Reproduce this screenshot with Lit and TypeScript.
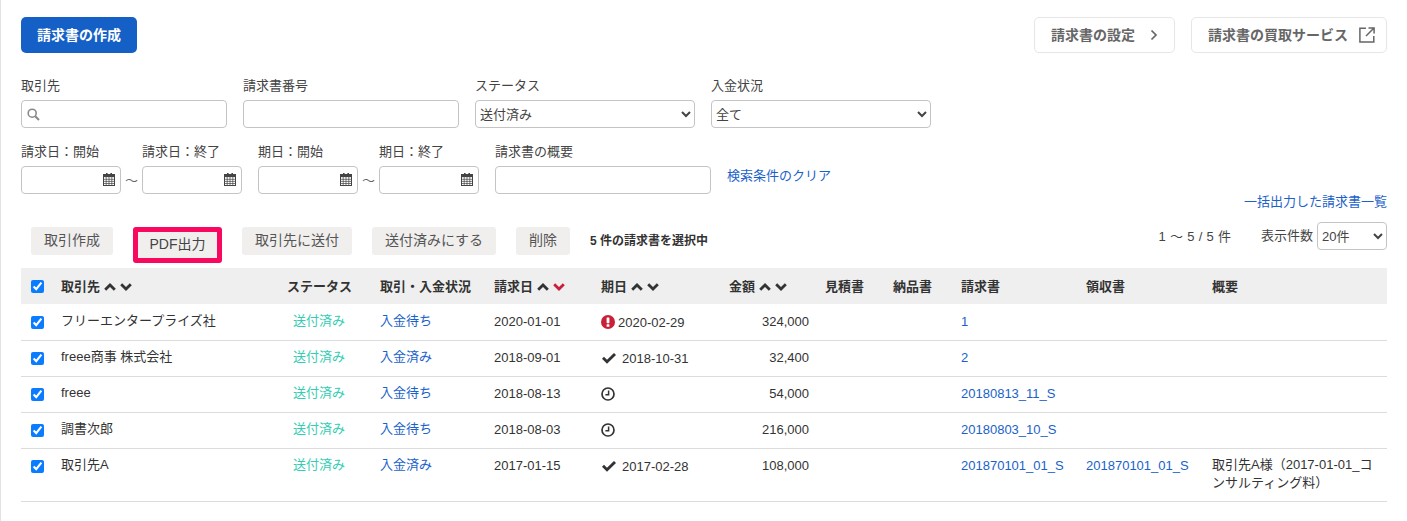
import { LitElement, html, css, svg } from "lit";
import { customElement } from "lit/decorators.js";

const chevron = (up: boolean, cls = "") => html`<svg class="chev ${cls}" viewBox="0 0 12 8" width="12" height="8">${svg`<polyline points=${up ? "1.2,6.8 6,2 10.8,6.8" : "1.2,1.2 6,6 10.8,1.2"} fill="none" stroke="currentColor" stroke-width="2.8"/>`}</svg>`;
const sort = (red = false) => html`<span class="sort">${chevron(true)}${chevron(false, red ? "red" : "")}</span>`;

const calendar = html`<svg class="cal" viewBox="0 0 12 13" width="12" height="13">${svg`
  <rect x="3" y="0" width="1.6" height="3" fill="#444"/><rect x="7.4" y="0" width="1.6" height="3" fill="#444"/>
  <rect x="0.5" y="1.5" width="11" height="11" fill="none" stroke="#444"/>
  <rect x="0.5" y="1.5" width="11" height="2.6" fill="#444"/>
  <path d="M0.5 6.3H11.5M0.5 8.4H11.5M0.5 10.5H11.5M3.2 4V12.5M6 4V12.5M8.8 4V12.5" stroke="#444" stroke-width="0.7" fill="none"/>`}</svg>`;

const iconAlert = html`<svg class="st" viewBox="0 0 14 14" width="14" height="14">${svg`<circle cx="7" cy="7" r="7" fill="#c9203a"/><rect x="5.6" y="2.4" width="2.8" height="5.8" rx="0.6" fill="#fff"/><rect x="5.6" y="9.3" width="2.8" height="2.4" rx="0.5" fill="#fff"/>`}</svg>`;
const iconCheck = html`<svg class="st chk" viewBox="0 0 14 11" width="14" height="11">${svg`<polygon points="0,5.8 2,3.8 5,6.7 12,0 14,2 5,10.8" fill="#333"/>`}</svg>`;
const iconClock = html`<svg class="st" viewBox="0 0 14 14" width="14" height="14">${svg`<circle cx="7" cy="7" r="6" fill="none" stroke="#333" stroke-width="1.7"/><polyline points="7.6,3.4 7.6,7.8 4.4,7.8" fill="none" stroke="#333" stroke-width="1.5"/>`}</svg>`;

interface Row { name: string; pay: string; date: string; due: string; icon: unknown; amt: string; inv: string; rec: string; note: string; }
const rows: Row[] = [
  { name: "フリーエンタープライズ社", pay: "入金待ち", date: "2020-01-01", due: "2020-02-29", icon: iconAlert, amt: "324,000", inv: "1", rec: "", note: "" },
  { name: "freee商事 株式会社", pay: "入金済み", date: "2018-09-01", due: "2018-10-31", icon: iconCheck, amt: "32,400", inv: "2", rec: "", note: "" },
  { name: "freee", pay: "入金待ち", date: "2018-08-13", due: "", icon: iconClock, amt: "54,000", inv: "20180813_11_S", rec: "", note: "" },
  { name: "調書次郎", pay: "入金待ち", date: "2018-08-03", due: "", icon: iconClock, amt: "216,000", inv: "20180803_10_S", rec: "", note: "" },
  { name: "取引先A", pay: "入金済み", date: "2017-01-15", due: "2017-02-28", icon: iconCheck, amt: "108,000", inv: "201870101_01_S", rec: "201870101_01_S", note: "取引先A様（2017-01-01_コンサルティング料）" },
];

@customElement("app-root")
export class AppRoot extends LitElement {
  static styles = css`
    :host { display: block; box-sizing: border-box; height: 521px; overflow: hidden; border-left: 1px solid #e2e2e2; padding: 17px 20px 0 20px; background: #fff; color: #333; font: 13px/18px "Liberation Sans", "Noto Sans CJK JP", sans-serif; }
    * { box-sizing: border-box; }
    a { color: #1a62c9; text-decoration: none; }
    .top { display: flex; align-items: flex-start; gap: 16px; height: 36px; }
    .top .spacer { flex: 1; }
    .btn-primary { width: 116px; height: 36px; border-radius: 5px; background: #1560c6; color: #fff; font-weight: 700; font-size: 14px; display: flex; align-items: center; justify-content: center; }
    .btn-out { height: 36px; border: 1px solid #e6e6e6; border-radius: 5px; color: #666; font-weight: 700; font-size: 14px; display: flex; align-items: center; padding-left: 16px; background: #fff; }
    .btn-out.a { width: 141px; gap: 15px; }
    .btn-out.b { width: 196px; gap: 11px; }
    .filters { display: flex; margin-top: 24px; }
    .filters.r2 { margin-top: 15px; }
    .field { display: flex; flex-direction: column; gap: 5px; }
    .field label { color: #444; font-size: 13px; line-height: 18px; height: 18px; }
    .box { display: block; height: 28px; border: 1px solid #c4c4c4; border-radius: 4px; background: #fff; position: relative; font: inherit; color: #444; }
    .search { width: 206px; }
    .search svg { position: absolute; left: 5px; top: 7px; }
    .num { width: 216px; }
    select.box { width: 220px; padding: 0; }
    .date { width: 100px; }
    .date .cal { position: absolute; right: 5px; top: 6px; }
    .ml16 { margin-left: 16px; }
    .tilde { width: 21px; text-align: center; align-self: flex-end; height: 28px; line-height: 30px; color: #666; font-size: 13px; }
    .daterange { display: flex; }
    .summary { width: 216px; }
    .clear { margin-left: 16px; align-self: flex-end; height: 28px; line-height: 20px; }
    .bulk { display: flex; justify-content: flex-end; height: 18px; line-height: 16px; }
    .toolbar { display: flex; justify-content: space-between; height: 46px; margin-top: 10px; }
    .actions { display: flex; gap: 20px; padding: 5px 0 0 10px; align-items: flex-start; }
    .act { height: 28px; border-radius: 3px; background: #f0efee; color: #555; text-align: center; line-height: 27px; font-size: 14px; white-space: nowrap; }
    .act.w82 { width: 82px; }
    .act.w54 { width: 54px; }
    .act.w110 { width: 110px; }
    .act.w124 { width: 124px; }
    .pdf { width: 89px; height: 36px; border: 5px solid #f8085f; border-radius: 3px; background: #f0efee; color: #444; text-align: center; line-height: 25px; font-size: 14px; white-space: nowrap; }
    .count { font-size: 12px; font-weight: 700; line-height: 28px; color: #333; }
    .paging { display: flex; align-items: flex-start; }
    .range { margin-right: 30px; line-height: 30px; color: #444; word-spacing: 0.6px; }
    .per { margin-right: 4px; line-height: 27px; color: #444; font-size: 13px; }
    select.small { width: 70px; }
    table { width: 1366px; border-collapse: separate; border-spacing: 0; table-layout: fixed; }
    th { background: #efefef; height: 36px; padding: 1px 0 0 10px; text-align: left; font-weight: 700; font-size: 13px; white-space: nowrap; vertical-align: middle; color: #333; }
    td { padding: 7px 10px 10px 10px; vertical-align: top; border-bottom: 1px solid #dcdcdc; color: #333; line-height: 18px; }
    tr.first td { padding-top: 8px; }
    tr.last td { padding-bottom: 9px; }
    .cb { padding: 0 0 0 10px; }
    td.cb, tr.last td.cb { padding: 11px 0 0 10px; }
    tr.first td.cb { padding-top: 12px; }
    input[type="checkbox"] { display: block; width: 13px; height: 13px; margin: 0; accent-color: #0a7cff; }
    .sort { display: inline-flex; gap: 4px; margin-left: 4px; color: #333; }
    .chev.red { color: #c9203a; }
    .statusc { padding-left: 16px; color: #35cdb2; }
    th.amt { padding-left: 38px; }
    td.amt { text-align: right; padding-right: 6px; padding-left: 0; }
    .latin { display: block; margin-top: 1px; margin-bottom: -1px; }
    .due { display: flex; align-items: center; gap: 3px; padding-top: 1px; height: 19px; margin-bottom: -1px; white-space: nowrap; }
    .due .st { flex: none; }
    .due .chk { margin: 0 3px 0 1px; }
    .due span { margin-top: 2px; }
    .note { padding-right: 14px; }
  `;

  private box(cls: string, inner: unknown = "") {
    return html`<span class="box ${cls}">${inner}</span>`;
  }

  render() {
    return html`
      <div class="top">
        <div class="btn-primary">請求書の作成</div>
        <div class="spacer"></div>
        <div class="btn-out a">請求書の設定
          <svg viewBox="0 0 8 12" width="8" height="12"><polyline points="1.5,1.5 6,6 1.5,10.5" fill="none" stroke="#666" stroke-width="1.7"/></svg>
        </div>
        <div class="btn-out b">請求書の買取サービス
          <svg viewBox="0 0 16 16" width="16" height="16"><path d="M7 1.2H.9V15.1H14.8V9M9.5.9H15.1V6.5M15 1L7 9" fill="none" stroke="#666" stroke-width="1.5"/></svg>
        </div>
      </div>

      <div class="filters">
        <div class="field"><label>取引先</label>${this.box("search", html`<svg viewBox="0 0 13 13" width="13" height="13"><circle cx="5.2" cy="5.2" r="4" fill="none" stroke="#888" stroke-width="1.6"/><line x1="8.2" y1="8.2" x2="12" y2="12" stroke="#888" stroke-width="2"/></svg>`)}</div>
        <div class="field ml16"><label>請求書番号</label>${this.box("num")}</div>
        <div class="field ml16"><label>ステータス</label><select class="box"><option>送付済み</option></select></div>
        <div class="field ml16"><label>入金状況</label><select class="box"><option>全て</option></select></div>
      </div>

      <div class="filters r2">
        <div class="daterange">
          <div class="field"><label>請求日：開始</label>${this.box("date", calendar)}</div>
          <span class="tilde">〜</span>
          <div class="field"><label>請求日：終了</label>${this.box("date", calendar)}</div>
        </div>
        <div class="daterange ml16">
          <div class="field"><label>期日：開始</label>${this.box("date", calendar)}</div>
          <span class="tilde">〜</span>
          <div class="field"><label>期日：終了</label>${this.box("date", calendar)}</div>
        </div>
        <div class="field ml16"><label>請求書の概要</label>${this.box("summary")}</div>
        <a class="clear">検索条件のクリア</a>
      </div>

      <div class="bulk"><a>一括出力した請求書一覧</a></div>

      <div class="toolbar">
        <div class="actions">
          <div class="act w82">取引作成</div>
          <div class="pdf">PDF出力</div>
          <div class="act w110">取引先に送付</div>
          <div class="act w124">送付済みにする</div>
          <div class="act w54">削除</div>
          <div class="count">5 件の請求書を選択中</div>
        </div>
        <div class="paging">
          <span class="range">1 〜 5 / 5 件</span>
          <span class="per">表示件数</span>
          <select class="box small"><option>20件</option></select>
        </div>
      </div>

      <table>
        <colgroup>
          <col style="width:30px" /><col style="width:226px" /><col style="width:93px" /><col style="width:114px" />
          <col style="width:107px" /><col style="width:100px" /><col style="width:124px" /><col style="width:68px" />
          <col style="width:68px" /><col style="width:125px" /><col style="width:126px" /><col style="width:185px" />
        </colgroup>
        <thead>
          <tr>
            <th class="cb"><input type="checkbox" checked /></th>
            <th>取引先${sort()}</th>
            <th>ステータス</th>
            <th>取引・入金状況</th>
            <th>請求日${sort(true)}</th>
            <th>期日${sort()}</th>
            <th class="amt">金額${sort()}</th>
            <th>見積書</th>
            <th>納品書</th>
            <th>請求書</th>
            <th>領収書</th>
            <th>概要</th>
          </tr>
        </thead>
        <tbody>
          ${rows.map((r, i) => html`
            <tr class=${i === 0 ? "first" : i === rows.length - 1 ? "last" : ""}>
              <td class="cb"><input type="checkbox" checked /></td>
              <td>${r.name}</td>
              <td class="statusc">送付済み</td>
              <td><a>${r.pay}</a></td>
              <td><span class="latin">${r.date}</span></td>
              <td><div class="due">${r.icon}<span>${r.due}</span></div></td>
              <td class="amt"><span class="latin">${r.amt}</span></td>
              <td></td>
              <td></td>
              <td><a class="latin">${r.inv}</a></td>
              <td><a class="latin">${r.rec}</a></td>
              <td class="note">${r.note}</td>
            </tr>`)}
        </tbody>
      </table>
    `;
  }
}
